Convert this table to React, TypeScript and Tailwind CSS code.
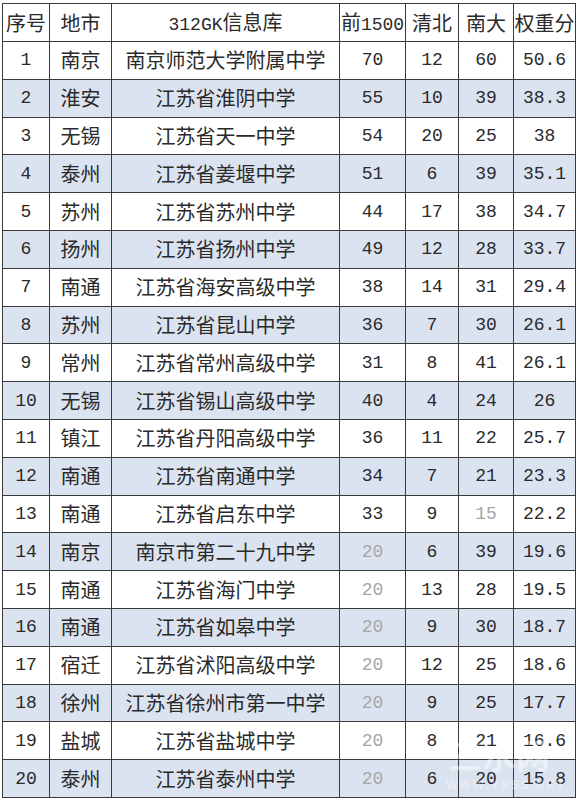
const rows: [number, string, string, number, number, number, string][] = [
  [1, '南京', '南京师范大学附属中学', 70, 12, 60, '50.6'],
  [2, '淮安', '江苏省淮阴中学', 55, 10, 39, '38.3'],
  [3, '无锡', '江苏省天一中学', 54, 20, 25, '38'],
  [4, '泰州', '江苏省姜堰中学', 51, 6, 39, '35.1'],
  [5, '苏州', '江苏省苏州中学', 44, 17, 38, '34.7'],
  [6, '扬州', '江苏省扬州中学', 49, 12, 28, '33.7'],
  [7, '南通', '江苏省海安高级中学', 38, 14, 31, '29.4'],
  [8, '苏州', '江苏省昆山中学', 36, 7, 30, '26.1'],
  [9, '常州', '江苏省常州高级中学', 31, 8, 41, '26.1'],
  [10, '无锡', '江苏省锡山高级中学', 40, 4, 24, '26'],
  [11, '镇江', '江苏省丹阳高级中学', 36, 11, 22, '25.7'],
  [12, '南通', '江苏省南通中学', 34, 7, 21, '23.3'],
  [13, '南通', '江苏省启东中学', 33, 9, 15, '22.2'],
  [14, '南京', '南京市第二十九中学', 20, 6, 39, '19.6'],
  [15, '南通', '江苏省海门中学', 20, 13, 28, '19.5'],
  [16, '南通', '江苏省如皋中学', 20, 9, 30, '18.7'],
  [17, '宿迁', '江苏省沭阳高级中学', 20, 12, 25, '18.6'],
  [18, '徐州', '江苏省徐州市第一中学', 20, 9, 25, '17.7'],
  [19, '盐城', '江苏省盐城中学', 20, 8, 21, '16.6'],
  [20, '泰州', '江苏省泰州中学', 20, 6, 20, '15.8'],
];

const cell = 'border border-[#3a3a3a] text-center p-0 whitespace-nowrap font-normal';
// digits are narrower in the source, so numbers get a smaller mono size
const num = 'text-[18px] [font-family:"Liberation_Mono",monospace]';
const grey = 'text-[#a6a6a6]';

export default function App() {
  return (
    <div className="relative bg-white w-[579px] h-[800px] pt-[3px] pl-[2px] text-[#2a2a2a] text-[20px] leading-none [font-family:'Noto_Sans_CJK_SC',sans-serif]">
      <table className="border-collapse table-fixed w-[573px]">
        <colgroup>
          <col className="w-[47px]" />
          <col className="w-[62px]" />
          <col className="w-[228px]" />
          <col className="w-[66px]" />
          <col className="w-[53px]" />
          <col className="w-[55px]" />
          <col className="w-[62px]" />
        </colgroup>
        <thead>
          <tr className="h-[38px]">
            <th className={cell}>序号</th>
            <th className={cell}>地市</th>
            <th className={cell}>
              <span className={num}>312GK</span>信息库
            </th>
            <th className={cell}>
              前<span className={num}>1500</span>
            </th>
            <th className={cell}>清北</th>
            <th className={cell}>南大</th>
            <th className={cell}>权重分</th>
          </tr>
        </thead>
        <tbody>
          {rows.map(([no, city, school, top, qb, nd, score]) => (
            <tr key={no} className={`h-[37.8px] ${no % 2 === 0 ? 'bg-[#dce3f0]' : 'bg-white'}`}>
              <td className={`${cell} ${num}`}>{no}</td>
              <td className={cell}>{city}</td>
              <td className={cell}>{school}</td>
              <td className={`${cell} ${num} ${top === 20 ? grey : ''}`}>{top}</td>
              <td className={`${cell} ${num}`}>{qb}</td>
              <td className={`${cell} ${num} ${nd === 15 ? grey : ''}`}>{nd}</td>
              <td className={`${cell} ${num}`}>{score}</td>
            </tr>
          ))}
        </tbody>
      </table>
      <div className="absolute left-[448px] top-[738px] text-white/45 font-bold text-[34px] leading-none pointer-events-none">
        三水网
      </div>
      <div className="absolute left-[446px] top-[779px] text-white/35 font-bold text-[12px] leading-none tracking-[2px] [font-family:'Liberation_Sans',sans-serif] pointer-events-none">
        WWW.YSSS.NET
      </div>
    </div>
  );
}
